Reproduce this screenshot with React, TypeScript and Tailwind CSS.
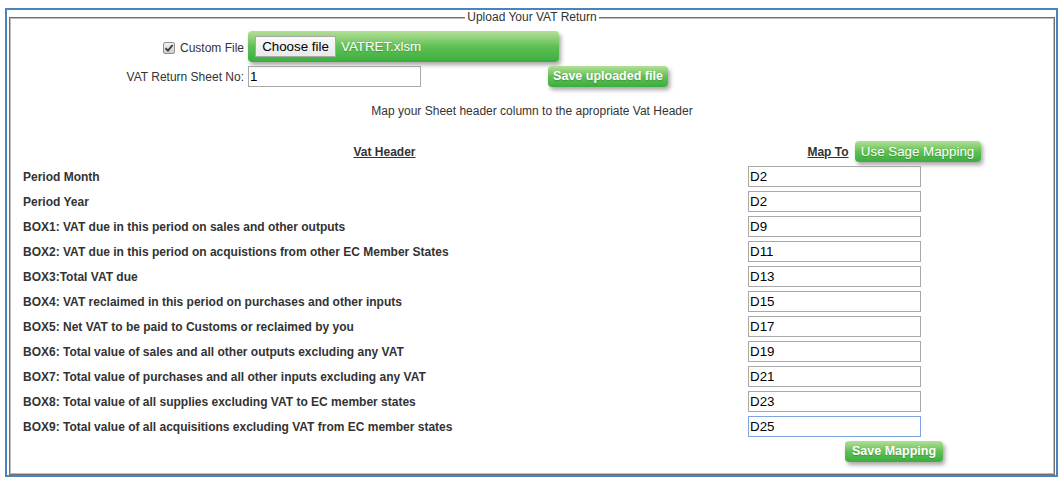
import React from "react";

const rows: [string, string][] = [
  ["Period Month", "D2"],
  ["Period Year", "D2"],
  ["BOX1: VAT due in this period on sales and other outputs", "D9"],
  ["BOX2: VAT due in this period on acquistions from other EC Member States", "D11"],
  ["BOX3:Total VAT due", "D13"],
  ["BOX4: VAT reclaimed in this period on purchases and other inputs", "D15"],
  ["BOX5: Net VAT to be paid to Customs or reclaimed by you", "D17"],
  ["BOX6: Total value of sales and all other outputs excluding any VAT", "D19"],
  ["BOX7: Total value of purchases and all other inputs excluding any VAT", "D21"],
  ["BOX8: Total value of all supplies excluding VAT to EC member states", "D23"],
  ["BOX9: Total value of all acquisitions excluding VAT from EC member states", "D25"],
];

const green =
  "rounded-[4px] bg-linear-to-b from-[#b4df96] via-[#5fc055] to-[#3aae3c] text-white shadow-[2px_3px_4px_rgba(0,0,0,0.35)] [text-shadow:0_1px_1px_rgba(0,0,0,0.2)]";

function GreenButton({ children, className }: { children: React.ReactNode; className: string }) {
  return (
    <button type="button" className={`${green} flex items-center justify-center leading-none ${className}`}>
      {children}
    </button>
  );
}

function FakeCheckbox() {
  return (
    <span className="flex h-[12px] w-[12px] items-center justify-center rounded-[2px] border border-[#8f8f8f] bg-linear-to-b from-[#f0f0f0] to-[#cfcfcf]">
      <svg width="10" height="10" viewBox="0 0 10 10">
        <path d="M1.5 5.2 L4 7.6 L8.6 2" fill="none" stroke="#3c3c3c" strokeWidth="1.9" />
      </svg>
    </span>
  );
}

export default function App() {
  return (
    <div className="min-h-screen bg-white font-['Liberation_Sans',Arial,sans-serif] text-[12px] text-[#333]">
      <div className="ml-[5px] mt-[8px] flex h-[469px] w-[1053px] border-2 border-[#4a84bf] pl-[2px] pr-[1px]">
        <fieldset className="flex-1 border border-[#6f6f6f] shadow-[inset_0_0_0_1px_#bdbdbd]">
          <legend className="mx-auto bg-white px-[2px] leading-[14px]">Upload Your VAT Return</legend>

          {/* upload section */}
          <div className="mt-[7px] flex h-[31px] items-center">
            <div className="flex w-[238px] items-center justify-end gap-[5px] pr-[4px] pt-[3px]">
              <FakeCheckbox />
              <span>Custom File</span>
            </div>
            <div className={`${green} flex h-[31px] w-[311px] items-center gap-[5px] pl-[7px]`}>
              <span className="flex h-[21px] w-[81px] items-center justify-center border border-[#a9a9a9] bg-linear-to-b from-[#fafafa] to-[#e9e9e9] text-[13.33px] text-black [text-shadow:none]">
                Choose file
              </span>
              <span className="text-[13.33px]">VATRET.xlsm</span>
            </div>
          </div>
          <div className="mt-[4px] flex h-[21px] items-center">
            <div className="w-[238px] pr-[4px] text-right">VAT Return Sheet No:</div>
            <input
              defaultValue="1"
              className="h-[21px] w-[173px] border border-[#a9a9a9] px-[1px] text-[13.33px] text-black outline-none"
            />
            <GreenButton className="ml-[127px] h-[21px] w-[120px] text-[12.5px] font-bold">Save uploaded file</GreenButton>
          </div>

          <div className="mt-[17px] text-center leading-[14px]">Map your Sheet header column to the apropriate Vat Header</div>

          {/* mapping table */}
          <div className="mt-[21px] grid grid-cols-[723px_296px] pl-[13px]">
            <div className="flex h-[25px] items-center justify-center font-bold underline">Vat Header</div>
            <div className="flex h-[25px] items-center justify-center gap-[6px]">
              <span className="font-bold underline">Map To</span>
              <GreenButton className="h-[21px] w-[126px] text-[13.33px]">Use Sage Mapping</GreenButton>
            </div>
            {rows.map(([label, value], i) => (
              <React.Fragment key={label}>
                <div className="flex h-[25px] items-center font-bold">{label}</div>
                <div className="flex h-[25px] items-center pl-[2px]">
                  <input
                    defaultValue={value}
                    className={`h-[21px] w-[173px] border px-[1px] text-[13.33px] text-black outline-none ${
                      i === rows.length - 1 ? "border-[#7ea6dc]" : "border-[#a9a9a9]"
                    }`}
                  />
                </div>
              </React.Fragment>
            ))}
            <div />
            <div className="flex h-[25px] items-center justify-center">
              <GreenButton className="h-[21px] w-[98px] text-[12.5px] font-bold">Save Mapping</GreenButton>
            </div>
          </div>
        </fieldset>
      </div>
    </div>
  );
}
